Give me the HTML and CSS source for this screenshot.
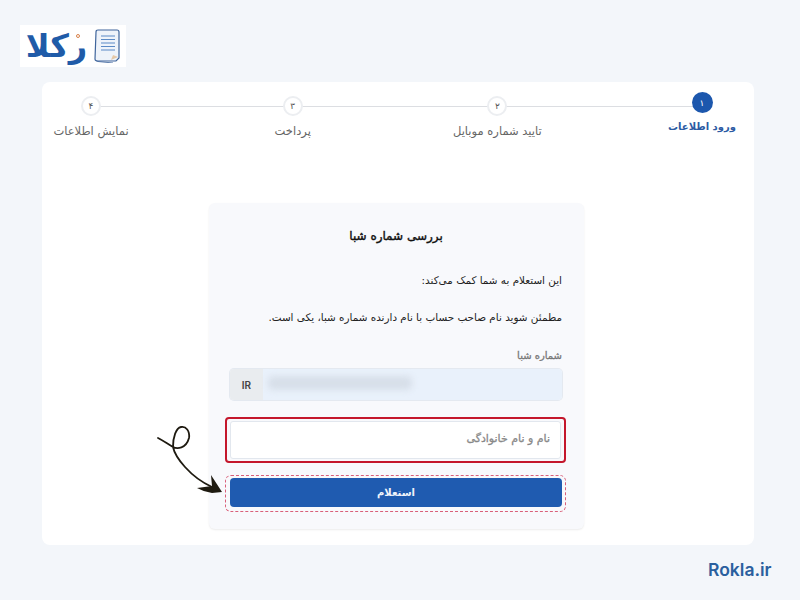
FILE: index.html
```html
<!doctype html>
<html lang="fa" dir="rtl">
<head>
    <meta charset="UTF-8">
    <title>Rokla</title>
    <link rel="stylesheet" href="styles.css">
</head>
<body>
<div class="page">
    <header class="top">
        <div class="logo">
            <svg class="logo-icon" width="26" height="34" viewBox="0 0 26 34">
                <path d="M2 28l0 3q0 1 2 1.500l15 1.500" fill="none" stroke="#5f7fae" stroke-width="1"/>
                <path d="M4 1h19q2 0 2 2v26l-3 3h-18q-3 0-3-2l1-27q0-2 2-2z" fill="#eef3fa" stroke="#3f659c" stroke-width="1.200"/>
                <path d="M7 7h14M7 10.500h14M7 14h14M7 17.500h14M7 21h14" stroke="#5b8ac6" stroke-width="1.200"/>
                <path d="M17 31l2-5 5 2z" fill="#e6c9a8"/>
            </svg>
            <span class="logo-text">رکلا<i class="logo-dot"></i></span>
        </div>
    </header>

    <main class="panel">
        <ol class="stepper">
            <li class="step step-active"><span class="dot">۱</span><span class="step-name">ورود اطلاعات</span></li>
            <li class="step"><span class="dot">۲</span><span class="step-name">تایید شماره موبایل</span></li>
            <li class="step"><span class="dot">۳</span><span class="step-name">پرداخت</span></li>
            <li class="step step-last"><span class="dot">۴</span><span class="step-name">نمایش اطلاعات</span></li>
        </ol>

        <form class="card">
            <h1 class="card-title">بررسی شماره شبا</h1>
            <p class="card-text">این استعلام به شما کمک می‌کند:</p>
            <p class="card-text">مطمئن شوید نام صاحب حساب با نام دارنده شماره شبا، یکی است.</p>
            <label class="field-label">شماره شبا</label>
            <div class="iban">
                <div class="iban-value"><span class="iban-blur"></span></div>
                <span class="iban-prefix">IR</span>
            </div>
            <div class="name-wrap">
                <div class="name-input">نام و نام خانوادگی</div>
            </div>
            <div class="submit-wrap">
                <button class="submit" type="button">استعلام</button>
            </div>
            <svg class="arrow" width="70" height="76" viewBox="0 0 70 76">
                <path d="M2 13C8 16 13 20 17 22C21 24 30 24 33 13C34 6 30 1 25 2C20 3 17 12 17 22C19 32 34 52 56 62" fill="none" stroke="#1e1a10" stroke-width="1.800" stroke-linecap="round"/>
                <path d="M66 67L55 50L56 61L41 63Q48 67 56 68z" fill="#1e1a10"/>
            </svg>
        </form>
    </main>

    <footer class="bottom">Rokla.ir</footer>
</div>
</body>
</html>
```

FILE: styles.css
```css
* {
    box-sizing: border-box;
}

body {
    margin: 0;
    background: #f3f6fa;
    font-family: "DejaVu Sans", "Noto Sans", sans-serif;
}

.page {
    display: flex;
    flex-direction: column;
    height: 600px;
    padding-top: 25px;
}

.top {
    display: flex;
    justify-content: flex-end;
    padding-left: 20px;
    height: 57px;
}

.logo {
    display: flex;
    align-items: center;
    justify-content: center;
    gap: 7px;
    width: 106px;
    height: 42px;
    background: #fff;
}

.logo-text {
    position: relative;
    color: #1f5ba8;
    font-size: 32px;
    font-weight: bold;
    line-height: 1;
}

.logo-dot {
    position: absolute;
    top: 4px;
    right: 7px;
    width: 4px;
    height: 4px;
    border: 1px solid #d9824a;
    border-radius: 50%;
}

.panel {
    width: 712px;
    height: 463px;
    margin-left: 42px;
    margin-right: 46px;
    padding-top: 10px;
    background: #fff;
    border-radius: 8px;
}

.stepper {
    position: relative;
    display: flex;
    justify-content: space-between;
    list-style: none;
    margin: 0;
    padding: 0;
}

.stepper::before {
    content: "";
    position: absolute;
    top: 14px;
    left: 49px;
    right: 52px;
    height: 1px;
    background: #dcdee2;
}

.step {
    position: relative;
    display: flex;
    flex-direction: column;
    align-items: center;
    width: 104px;
    padding-top: 4px;
}

.step-last {
    width: 98px;
}

.dot {
    display: flex;
    align-items: center;
    justify-content: center;
    width: 20px;
    height: 20px;
    border: 2px solid #eceef1;
    border-radius: 50%;
    background: #fff;
    color: #555;
    font-size: 9px;
}

.step-name {
    margin-top: 8px;
    color: #666;
    font-size: 11.500px;
    white-space: nowrap;
}

.step-active {
    padding-top: 0;
}

.step-active .dot {
    width: 21px;
    height: 21px;
    border: 0;
    background: #1c57ad;
    color: #fff;
}

.step-active .step-name {
    margin-top: 8px;
    color: #2c5ba3;
    font-size: 10px;
    font-weight: bold;
}

.card {
    position: relative;
    width: 375px;
    height: 326px;
    margin: 65px 170px 0 167px;
    padding: 25px 22px 0 21px;
    background: #f8f9fc;
    border-radius: 6px;
    box-shadow: 0 1px 2px rgba(0, 0, 0, .08);
}

.card-title {
    margin: 0 0 28px;
    color: #111;
    font-size: 12px;
    font-weight: normal;
    -webkit-text-stroke: .4px #111;
    line-height: 16px;
    text-align: center;
}

.card-text {
    margin: 0 0 21px;
    color: #222;
    font-size: 10.400px;
    line-height: 16px;
}

.field-label {
    display: block;
    margin-top: 23px;
    color: #777;
    font-size: 10px;
    -webkit-text-stroke: .3px #777;
    line-height: 16px;
}

.iban {
    display: flex;
    height: 31px;
    margin-top: 5px;
    border-radius: 4px;
    overflow: hidden;
    direction: ltr;
    flex-direction: row-reverse;
    box-shadow: 0 0 0 1px #e4e9f0;
}

.iban-prefix {
    display: flex;
    align-items: center;
    justify-content: center;
    width: 33px;
    background: #e9ecef;
    color: #444;
    font-family: "Inter", sans-serif;
    font-size: 10px;
    font-weight: 600;
}

.iban-value {
    flex: 1;
    padding: 7px 0 0 5px;
    background: #e9f1fb;
}

.iban-blur {
    display: block;
    width: 144px;
    height: 14px;
    background: #d7dfe9;
    border-radius: 5px;
    filter: blur(3px);
}

.name-wrap {
    width: 341px;
    height: 46px;
    margin: 17px -4px 0 -5px;
    padding: 2px 3px;
    border: 2px solid #c4172c;
    border-radius: 4px;
}

.name-input {
    height: 38px;
    padding-right: 10px;
    background: #fff;
    border: 1px solid #e2e7ee;
    border-radius: 3px;
    color: #888;
    font-size: 11px;
    -webkit-text-stroke: .3px #888;
    line-height: 34px;
}

.submit-wrap {
    width: 341px;
    height: 37px;
    margin: 12px -4px 0 -5px;
    padding: 2px 3px 2px 4px;
    border: 1px dashed #d9607a;
    border-radius: 6px;
}

.submit {
    display: block;
    width: 100%;
    height: 29px;
    border: 0;
    border-radius: 4px;
    background: #1f5bb0;
    color: #eef3fb;
    font-family: inherit;
    font-size: 10px;
    font-weight: bold;
}

.arrow {
    position: absolute;
    top: 222px;
    left: -53px;
}

.bottom {
    direction: ltr;
    margin: 15px 0 0 708px;
    color: #2a5f9e;
    font-family: "Inter", sans-serif;
    font-size: 17.500px;
    font-weight: 600;
    line-height: 20px;
}
```
